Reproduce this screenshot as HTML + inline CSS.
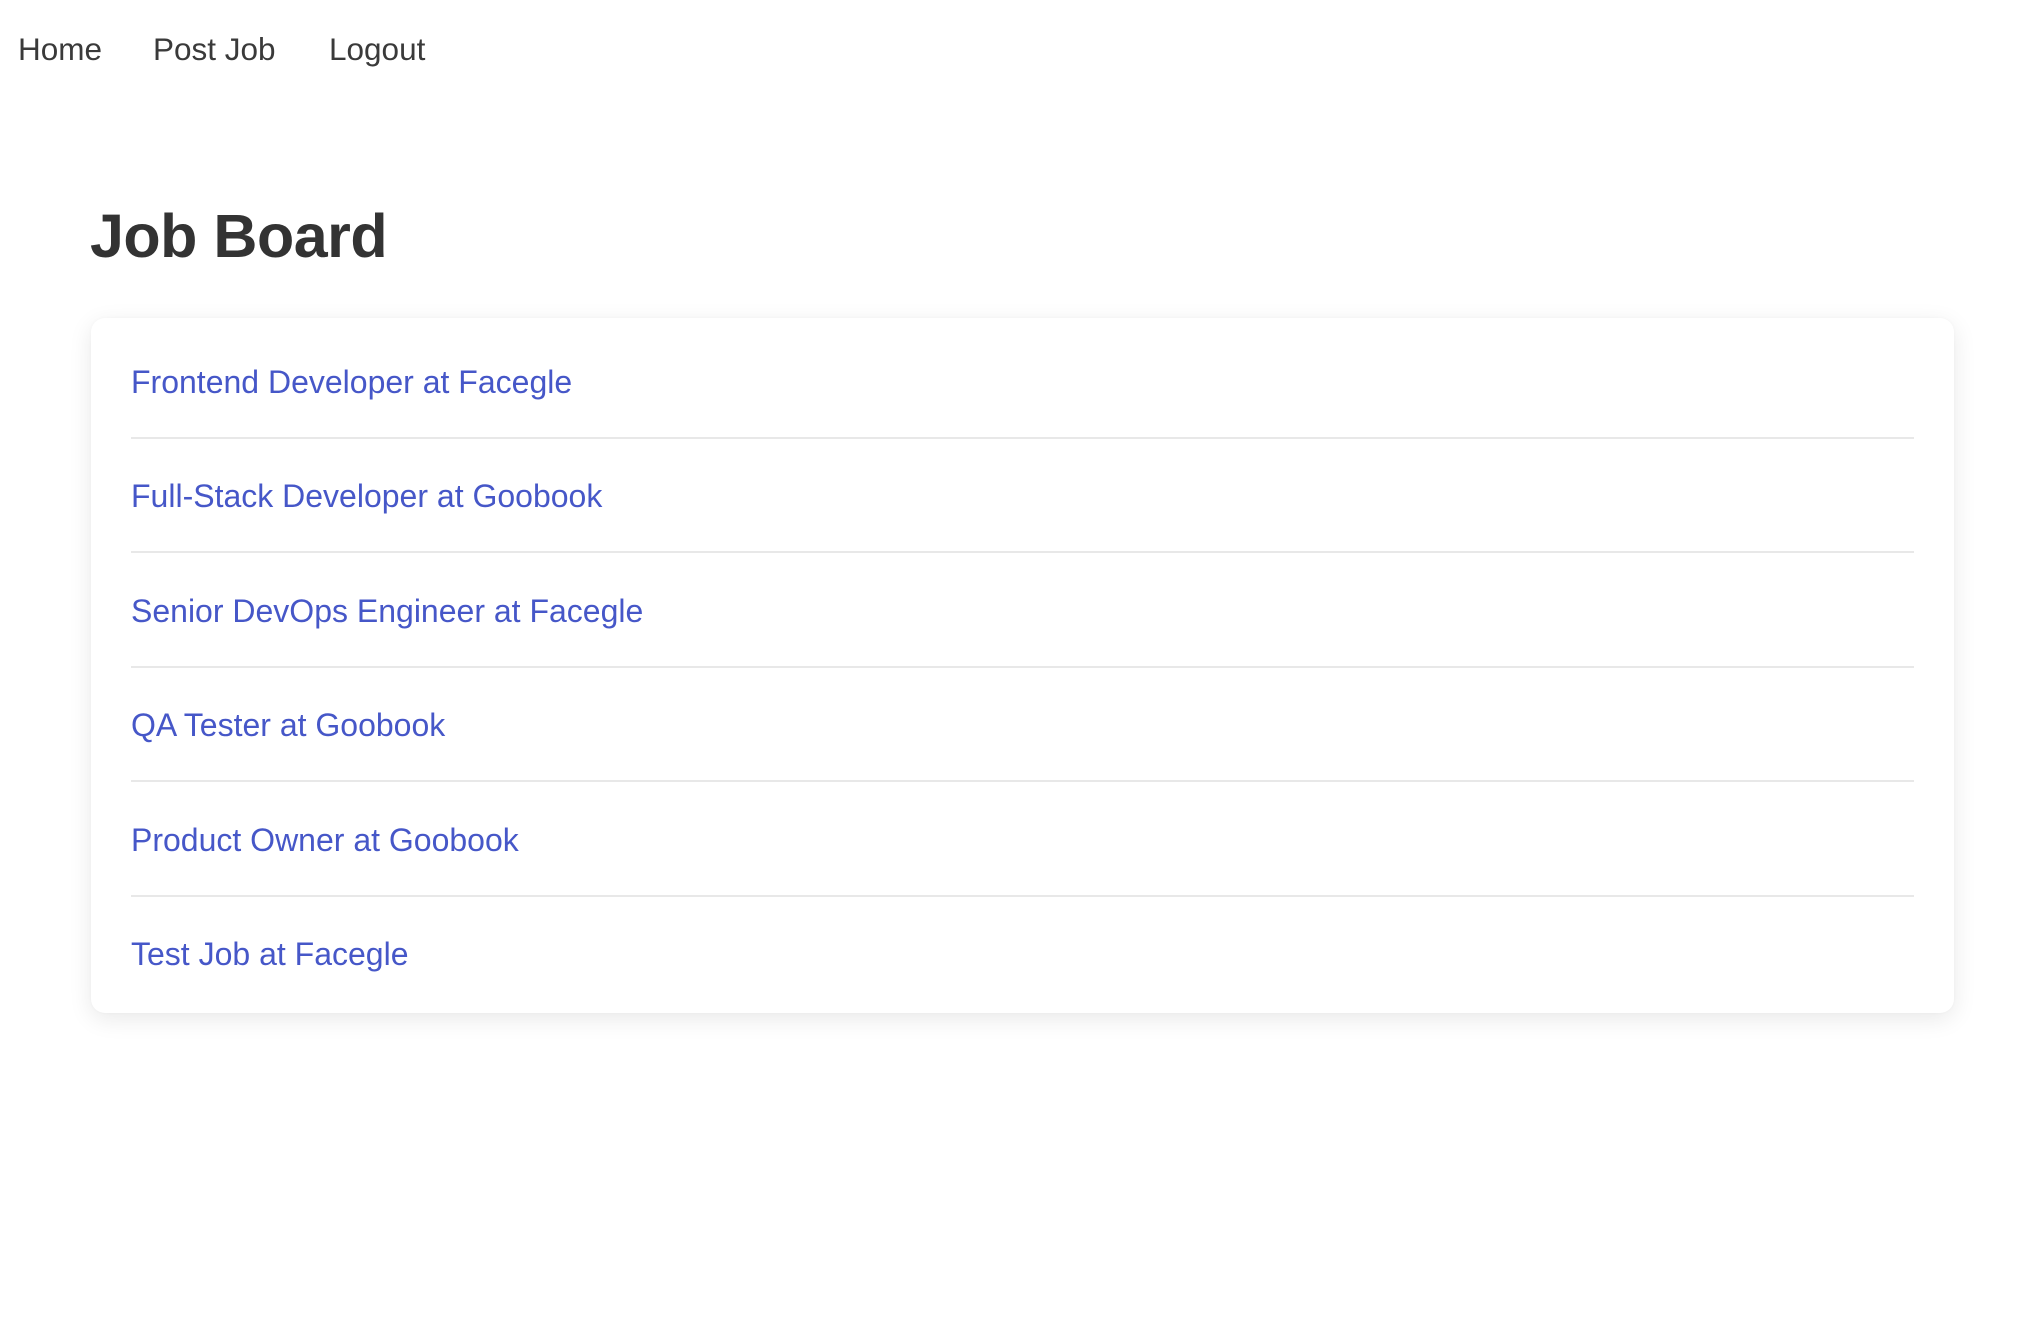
<!DOCTYPE html>
<html><head><meta charset="utf-8"><style>
body{margin:0;background:#fff;font-family:"Liberation Sans",sans-serif;color:#333;width:2018px;height:1320px;overflow:hidden;position:relative}
.nav a{position:absolute;top:30px;font-size:31.5px;color:#3a3a3a;text-decoration:none;line-height:38px}
h1{position:absolute;left:90px;top:196px;margin:0;font-size:61px;font-weight:bold;color:#333;line-height:80px;letter-spacing:-0.5px}
.card{position:absolute;left:91px;top:318px;width:1873px;height:695px;background:#fff;border-radius:14px;box-shadow:0 6px 24px rgba(0,0,0,0.09),0 0 3px rgba(0,0,0,0.03);width:1873px}
.item{position:absolute;left:40px;width:1783px;height:112px;border-bottom:2px solid #e8e8e8;box-sizing:content-box}
.item a{position:absolute;left:0;top:38px;font-size:32px;color:#4657c8;text-decoration:none;line-height:38px}
.item.last{border-bottom:none}
</style></head><body>
<div class="nav"><a style="left:18px">Home</a><a style="left:153px">Post Job</a><a style="left:329px">Logout</a></div>
<h1>Job Board</h1>
<div class="card" style="width:1863px">
<div class="item" style="top:7px"><a>Frontend Developer at Facegle</a></div>
<div class="item" style="top:121px"><a>Full-Stack Developer at Goobook</a></div>
<div class="item" style="top:236px"><a>Senior DevOps Engineer at Facegle</a></div>
<div class="item" style="top:350px"><a>QA Tester at Goobook</a></div>
<div class="item" style="top:465px"><a>Product Owner at Goobook</a></div>
<div class="item last" style="top:579px"><a>Test Job at Facegle</a></div>
</div>
</body></html>
